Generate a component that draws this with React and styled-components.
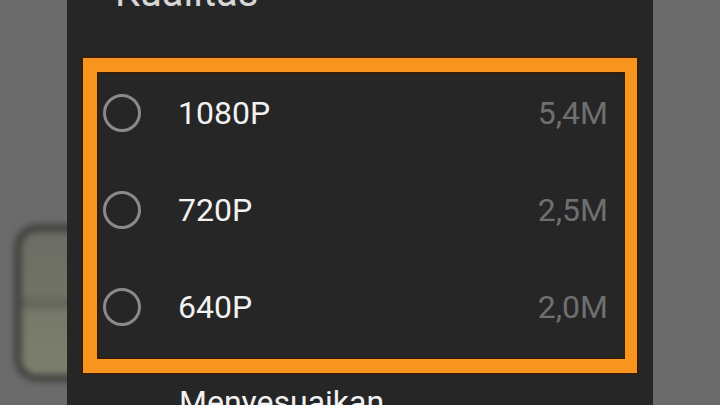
import React from "react";
import styled, { createGlobalStyle } from "styled-components";

const Global = createGlobalStyle`
  html, body { margin: 0; padding: 0; background: #6b6b6b; }
  * { box-sizing: border-box; }
`;

const Page = styled.div`
  position: relative;
  width: 720px;
  height: 405px;
  overflow: hidden;
  background: #6b6b6b;
  display: flex;
  font-family: Roboto, "Noto Sans", sans-serif;
`;

const BlurCard = styled.div`
  position: absolute;
  left: 15px;
  top: 225px;
  width: 90px;
  height: 156px;
  border-radius: 22px;
  background: linear-gradient(180deg, #6c6d65 0%, #717366 45%, #5f6058 50%, #76786a 56%, #7d7f6e 100%);
  border: 6px solid #363633;
  filter: blur(3.5px);
`;

const Dialog = styled.div`
  position: relative;
  z-index: 1;
  margin-left: 67px;
  width: 586px;
  height: 100%;
  background: #262626;
  padding: 0 16px;
  display: flex;
  flex-direction: column;
`;

const Title = styled.div`
  margin-top: -27px;
  padding-left: 32px;
  height: 40px;
  line-height: 40px;
  font-size: 40px;
  color: #d6d6d6;
  white-space: nowrap;
`;

const Highlight = styled.div`
  margin-top: 45px;
  border: 14px solid #f7951e;
  box-shadow: 0 0 0 1.5px #3a1c05, inset 0 0 0 1.5px #3a1c05;
  border-right-width: 12px;
  padding: 0 0 11px;
  display: flex;
  flex-direction: column;
  gap: 15px;
`;

const Row = styled.div`
  height: 82px;
  display: flex;
  align-items: center;
  padding: 0 17px 0 6px;
`;

const Radio = styled.span`
  width: 38px;
  height: 38px;
  border-radius: 50%;
  border: 3px solid #8a8a8a;
  flex: none;
`;

const Label = styled.span`
  margin-left: 37px;
  flex: 1;
  font-size: 32px;
  color: #f2f2f2;
`;

const Size = styled.span`
  font-size: 32px;
  color: #6f6f6f;
`;

const Footer = styled.div`
  margin-top: 9px;
  padding-left: 96px;
  line-height: 40px;
  font-size: 32px;
  color: #f2f2f2;
  white-space: nowrap;
`;

const options = [
  { label: "1080P", size: "5,4M" },
  { label: "720P", size: "2,5M" },
  { label: "640P", size: "2,0M" },
];

export default function App() {
  return (
    <>
      <Global />
      <Page>
        <BlurCard />
        <Dialog>
          <Title>Kualitas</Title>
          <Highlight>
            {options.map((o) => (
              <Row key={o.label}>
                <Radio />
                <Label>{o.label}</Label>
                <Size>{o.size}</Size>
              </Row>
            ))}
          </Highlight>
          <Footer>Menyesuaikan</Footer>
        </Dialog>
      </Page>
    </>
  );
}
